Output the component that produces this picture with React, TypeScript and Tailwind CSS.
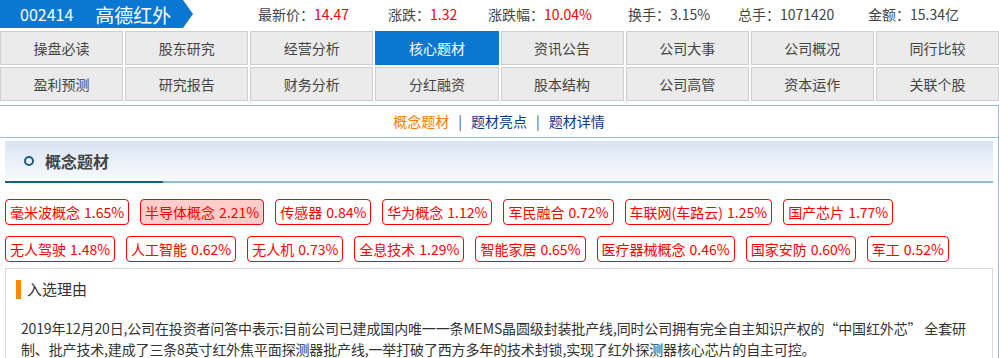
import React from 'react';

const stats = [
  { label: '最新价', value: '14.47', red: true, w: 'w-[130px]' },
  { label: '涨跌', value: '1.32', red: true, w: 'w-[100px]' },
  { label: '涨跌幅', value: '10.04%', red: true, w: 'w-[140px]' },
  { label: '换手', value: '3.15%', red: false, w: 'w-[110px]' },
  { label: '总手', value: '1071420', red: false, w: 'w-[130px]' },
  { label: '金额', value: '15.34亿', red: false, w: '' },
];

const navItems = [
  '操盘必读', '股东研究', '经营分析', '核心题材', '资讯公告', '公司大事', '公司概况', '同行比较',
  '盈利预测', '研究报告', '财务分析', '分红融资', '股本结构', '公司高管', '资本运作', '关联个股',
];

const concepts = [
  { name: '毫米波概念', pct: '1.65%' },
  { name: '半导体概念', pct: '2.21%', hot: true },
  { name: '传感器', pct: '0.84%' },
  { name: '华为概念', pct: '1.12%' },
  { name: '军民融合', pct: '0.72%' },
  { name: '车联网(车路云)', pct: '1.25%' },
  { name: '国产芯片', pct: '1.77%' },
  { name: '无人驾驶', pct: '1.48%' },
  { name: '人工智能', pct: '0.62%' },
  { name: '无人机', pct: '0.73%' },
  { name: '全息技术', pct: '1.29%' },
  { name: '智能家居', pct: '0.65%' },
  { name: '医疗器械概念', pct: '0.46%' },
  { name: '国家安防', pct: '0.60%' },
  { name: '军工', pct: '0.52%' },
];

export default function App() {
  return (
    <div className="w-[999px] bg-white font-['Noto_Sans_CJK_SC','Noto_Sans',sans-serif] text-[#333]">
      {/* stock header */}
      <div className="flex h-[28px] items-center">
        <div className="flex h-[28px] w-[193px] items-center bg-[#0a78d2] pl-[20px] text-white [clip-path:polygon(0_0,183px_0,193px_50%,183px_100%,0_100%)]">
          <span className="text-[16px] leading-none">002414</span>
          <span className="ml-[22px] text-[19px] leading-none">高德红外</span>
        </div>
        <div className="ml-[65px] flex items-center text-[14px]">
          {stats.map((s) => (
            <div key={s.label} className={`${s.w} whitespace-nowrap`}>
              <span className="text-[#444]">{s.label}：</span>
              <span className={s.red ? 'text-[#ff0000]' : 'text-[#444]'}>{s.value}</span>
            </div>
          ))}
        </div>
      </div>

      {/* nav grid */}
      <div className="mt-[3px] grid grid-cols-8 gap-[2px]">
        {navItems.map((n) => (
          <div
            key={n}
            className={
              n === '核心题材'
                ? 'flex h-[34px] items-center justify-center border border-[#0a78d2] bg-[#0a78d2] text-[14px] text-white'
                : 'flex h-[34px] items-center justify-center border border-[#cfcfcf] bg-[#ebebeb] text-[14px] text-[#444]'
            }
          >
            {n}
          </div>
        ))}
      </div>

      {/* content box */}
      <div className="mt-[4px] border-t border-r border-[#9db9d1]">
        <div className="flex h-[32px] items-center justify-center border-b border-[#9db9d1] text-[14px]">
          <span className="text-[#ff7a00]">概念题材</span>
          <span className="mx-[9px] text-[#555]">|</span>
          <span className="text-[#0b3a8c]">题材亮点</span>
          <span className="mx-[9px] text-[#555]">|</span>
          <span className="text-[#0b3a8c]">题材详情</span>
        </div>

        <div className="px-[5px] pt-[3px]">
          <div className="flex h-[40px] items-center bg-gradient-to-b from-[#d9e4f2] to-[#f9fbfe]">
            <div className="ml-[19px] h-[10px] w-[10px] rounded-full border-[2px] border-[#1f5b87]" />
            <span className="ml-[11px] text-[16px] font-bold text-[#444]">概念题材</span>
          </div>
          <div className="flex h-[2px]">
            <div className="w-[158px] bg-[#1c5c88]" />
            <div className="flex-1 bg-[#93bcd8]" />
          </div>

          <div className="mt-[16px] flex flex-wrap gap-[11px]">
            {concepts.map((c) => (
              <div
                key={c.name}
                className={
                  c.hot
                    ? 'flex h-[26px] items-center whitespace-nowrap rounded-[4px] border border-[#ff0000] bg-[#ffcccc] px-[4px] text-[14px] text-[#ff0000]'
                    : 'flex h-[26px] items-center whitespace-nowrap rounded-[4px] border border-[#ff0000] bg-white px-[4px] text-[14px] text-[#ff0000]'
                }
              >
                {c.name}
                <span className="ml-[4px]">{c.pct}</span>
              </div>
            ))}
          </div>

          <div className="mt-[6px] border border-[#d9d9d9] pt-[9px] pb-[20px]">
            <div className="flex items-center">
              <div className="ml-[10px] h-[19px] w-[5px] bg-[#ff8a00]" />
              <span className="ml-[6px] text-[15px] text-[#333]">入选理由</span>
            </div>
            <p className="mt-[17px] pl-[15px] pr-[6px] text-[14px] leading-[21px] tracking-[-0.15px] text-[#333]">
              2019年12月20日,公司在投资者问答中表示:目前公司已建成国内唯一一条MEMS晶圆级封装批产线,同时公司拥有完全自主知识产权的“中国红外芯” 全套研制、批产技术,建成了三条8英寸红外焦平面探测器批产线,一举打破了西方多年的技术封锁,实现了红外探测器核心芯片的自主可控。
            </p>
          </div>
        </div>
      </div>
    </div>
  );
}
